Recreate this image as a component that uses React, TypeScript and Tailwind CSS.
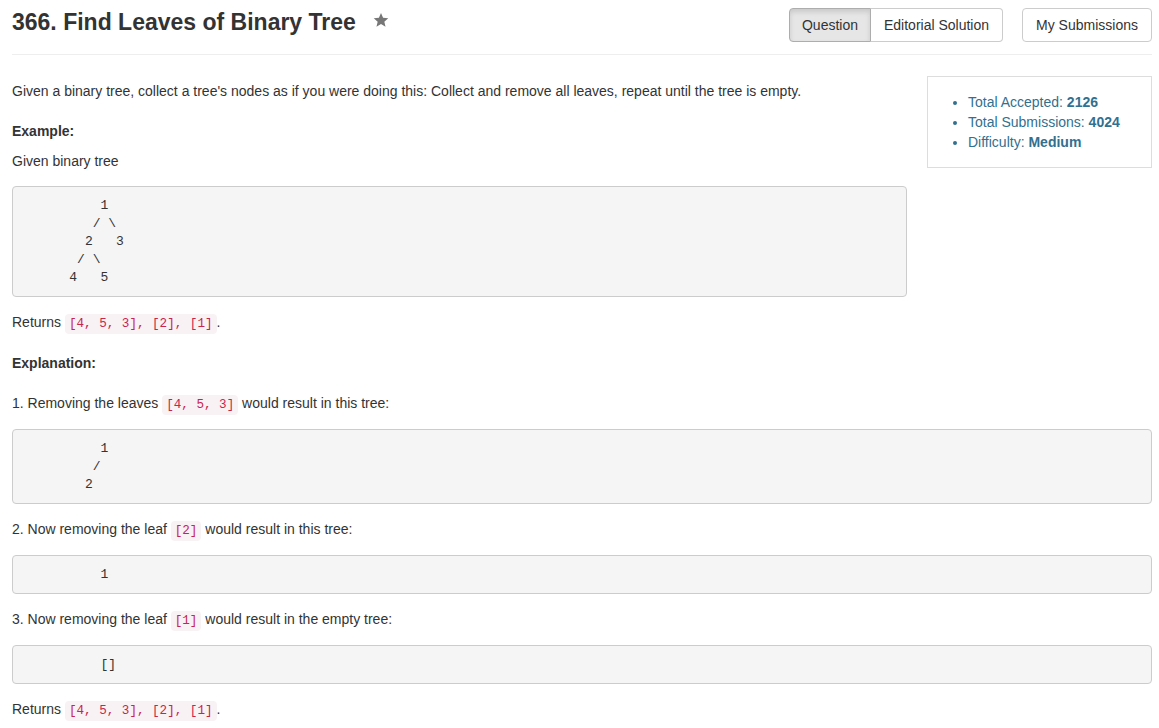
import React from "react";

const Code = ({ children }: { children: React.ReactNode }) => (
  <code className="font-['Liberation_Mono',monospace] text-[12.6px] leading-none px-[4px] py-[3px] rounded-[4px] bg-[#f9f2f4] text-[#c7254e] whitespace-pre">
    {children}
  </code>
);

const Pre = ({ text, className = "" }: { text: string; className?: string }) => (
  <pre
    className={
      "overflow-auto block p-[9.5px] border border-[#ccc] rounded-[4px] bg-[#f5f5f5] text-[#333] font-['Liberation_Mono',monospace] text-[13px] leading-[18px] whitespace-pre " +
      className
    }
  >
    {text}
  </pre>
);

export default function App() {
  return (
    <div className="min-h-[728px] bg-white font-['Liberation_Sans',Arial,sans-serif] text-[14px] leading-[20px] text-[#333]">
      <div className="w-[1140px] ml-[12px]">
        <div className="flex items-start justify-between h-[55px] border-b border-[#eee]">
          <div className="flex items-start pt-[9px]">
            <h3 className="text-[23px] leading-[26px] font-bold text-[#333]">
              366. Find Leaves of Binary Tree
            </h3>
            <svg
              className="ml-[17px] mt-[3px]"
              width="16"
              height="16"
              viewBox="0 0 24 24"
              fill="#777"
            >
              <path d="M12 1.5l3.1 7.2 7.8.7-5.9 5.1 1.8 7.6L12 18.1l-6.8 4 1.8-7.6L1.1 9.4l7.8-.7z" />
            </svg>
          </div>
          <div className="flex items-start mt-[8px]">
            <div className="flex">
              <button className="w-[82px] h-[34px] border border-[#adadad] bg-[#e6e6e6] rounded-l-[4px] shadow-[inset_0_3px_5px_rgba(0,0,0,0.125)] text-[14px] text-[#333]">
                Question
              </button>
              <button className="w-[132px] h-[34px] border border-l-0 border-[#ccc] bg-white rounded-r-[4px] text-[14px] text-[#333]">
                Editorial Solution
              </button>
            </div>
            <button className="ml-[19px] w-[130px] h-[34px] border border-[#ccc] bg-white rounded-[4px] text-[14px] text-[#333]">
              My Submissions
            </button>
          </div>
        </div>

        <div className="flow-root">
          <div className="float-right w-[225px] h-[92px] mt-[21px] ml-[20px] mb-[20px] border border-[#ddd] py-[15px]">
            <ul className="list-disc pl-[40px] text-[#31708f]">
              <li>
                Total Accepted: <b>2126</b>
              </li>
              <li>
                Total Submissions: <b>4024</b>
              </li>
              <li>
                Difficulty: <b>Medium</b>
              </li>
            </ul>
          </div>

          <p className="mt-[26px]">
            Given a binary tree, collect a tree's nodes as if you were doing this: Collect and remove all leaves, repeat until the tree is empty.
          </p>
          <p className="mt-[20px] font-bold">Example:</p>
          <p className="mt-[10px]">Given binary tree</p>
          <Pre
            className="mt-[15px]"
            text={"          1\n         / \\\n        2   3\n       / \\\n      4   5"}
          />
          <p className="mt-[15px]">
            Returns <Code>[4, 5, 3], [2], [1]</Code>.
          </p>
          <p className="mt-[21px] font-bold">Explanation:</p>
          <p className="mt-[20px]">
            1. Removing the leaves <Code>[4, 5, 3]</Code> would result in this tree:
          </p>
          <Pre className="mt-[16px]" text={"          1\n         /\n        2"} />
          <p className="mt-[15px]">
            2. Now removing the leaf <Code>[2]</Code> would result in this tree:
          </p>
          <Pre className="mt-[16px]" text={"          1"} />
          <p className="mt-[15px]">
            3. Now removing the leaf <Code>[1]</Code> would result in the empty tree:
          </p>
          <Pre className="mt-[16px]" text={"          []"} />
          <p className="mt-[15px]">
            Returns <Code>[4, 5, 3], [2], [1]</Code>.
          </p>
        </div>
      </div>
    </div>
  );
}
